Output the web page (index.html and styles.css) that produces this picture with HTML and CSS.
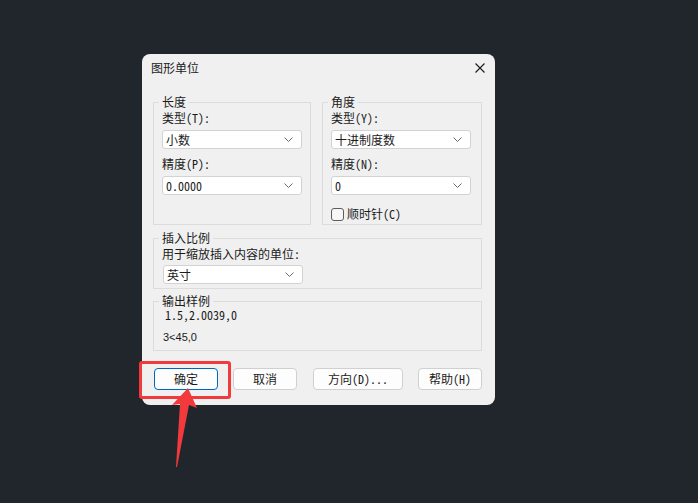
FILE: index.html
```html
<!DOCTYPE html>
<html lang="zh-CN">
<head>
<meta charset="utf-8">
<title>图形单位</title>
<link rel="stylesheet" href="styles.css">
</head>
<body>
<div class="stage">
  <div class="dialog">
    <div class="titlebar">
      <span class="title">图形单位</span>
      <svg class="close" width="10" height="10" viewBox="0 0 10 10"><path d="M0.5 0.5 L9.5 9.5 M9.5 0.5 L0.5 9.5" stroke="#1a1a1a" stroke-width="1.1" fill="none"/></svg>
    </div>
    <div class="content">
      <div class="row">
        <fieldset class="group g-len">
          <legend>长度</legend>
          <div class="label">类型(T):</div>
          <div class="select"><span>小数</span><svg class="chev" width="9" height="5" viewBox="0 0 9 5"><path d="M0.5 0.5 L4.5 4.5 L8.5 0.5" stroke="#6a6a6a" fill="none"/></svg></div>
          <div class="label gap">精度(P):</div>
          <div class="select"><span>0.0000</span><svg class="chev" width="9" height="5" viewBox="0 0 9 5"><path d="M0.5 0.5 L4.5 4.5 L8.5 0.5" stroke="#6a6a6a" fill="none"/></svg></div>
        </fieldset>
        <fieldset class="group g-ang">
          <legend>角度</legend>
          <div class="label">类型(Y):</div>
          <div class="select"><span>十进制度数</span><svg class="chev" width="9" height="5" viewBox="0 0 9 5"><path d="M0.5 0.5 L4.5 4.5 L8.5 0.5" stroke="#6a6a6a" fill="none"/></svg></div>
          <div class="label gap">精度(N):</div>
          <div class="select"><span>0</span><svg class="chev" width="9" height="5" viewBox="0 0 9 5"><path d="M0.5 0.5 L4.5 4.5 L8.5 0.5" stroke="#6a6a6a" fill="none"/></svg></div>
          <div class="check"><span class="box"></span><span>顺时针(C)</span></div>
        </fieldset>
      </div>
      <fieldset class="group g-ins">
        <legend>插入比例</legend>
        <div class="label">用于缩放插入内容的单位:</div>
        <div class="select s-ins"><span>英寸</span><svg class="chev" width="9" height="5" viewBox="0 0 9 5"><path d="M0.5 0.5 L4.5 4.5 L8.5 0.5" stroke="#6a6a6a" fill="none"/></svg></div>
      </fieldset>
      <fieldset class="group g-out">
        <legend>输出样例</legend>
        <div class="out1">1.5,2.0039,0</div>
        <div class="out2">3&lt;45,0</div>
      </fieldset>
      <div class="buttons">
        <div class="btn default">确定</div>
        <div class="btn">取消</div>
        <div class="btn wide">方向(D)...</div>
        <div class="btn">帮助(H)</div>
      </div>
    </div>
  </div>
  <div class="highlight"></div>
  <svg class="arrow" width="698" height="503" viewBox="0 0 698 503">
    <polygon points="188,388 197,408 189,405 177,467 176,467 180,404 172,405" fill="#f23a3c"/>
  </svg>
</div>
</body>
</html>
```

FILE: styles.css
```css
* { box-sizing: border-box; }
html, body { margin: 0; padding: 0; }
body {
  background: #21262d;
  font-family: "Noto Sans Mono CJK SC", "Noto Sans CJK SC", "Noto Sans", sans-serif;
  font-size: 12px;
  color: #1b1b1b;
  overflow: hidden;
}
.stage {
  position: relative;
  width: 698px;
  height: 503px;
  padding: 54px 0 0 142px;
}
.dialog {
  width: 353px;
  height: 351px;
  background: #f0f0f0;
  border-radius: 8px;
  display: flex;
  flex-direction: column;
}
.titlebar {
  height: 28px;
  display: flex;
  align-items: center;
  justify-content: space-between;
  padding: 0 10px 0 9px;
}
.title { font-family: "Noto Sans CJK SC", sans-serif; font-size: 12px; line-height: 16px; }
.close { display: block; }
.content {
  padding: 12px 13px 0 11px;
  display: flex;
  flex-direction: column;
}
.row { display: flex; gap: 11px; }
.group {
  margin: 0;
  border: 1px solid #dcdcdc;
  padding: 0 8px 0 8px;
  min-width: 0;
}
.group legend {
  padding: 0 3px;
  margin-left: -3px;
  line-height: 16px;
  font-family: "Noto Sans CJK SC", sans-serif;
}
.g-len { width: 158px; padding-bottom: 4px; }
.g-ang { width: 160px; padding-bottom: 2px; }
.label { line-height: 16px; height: 16px; white-space: nowrap; }
.label.gap { margin-top: 7px; }
.select {
  margin-top: 4px;
  width: 140px;
  height: 19px;
  background: #fff;
  border: 1px solid #d3d3d3;
  border-radius: 3px;
  display: flex;
  align-items: center;
  justify-content: space-between;
  padding: 0 8px 0 3px;
  line-height: 16px;
}
.chev { display: block; }
.check {
  margin-top: 11px;
  display: flex;
  align-items: center;
  gap: 3px;
  line-height: 16px;
}
.box {
  width: 13px;
  height: 13px;
  border: 1px solid #5c5c5c;
  border-radius: 3px;
  background: #f7f7f7;
}
.g-ins { margin-top: 5px; padding-bottom: 4px; }
.s-ins { margin-top: 3px; margin-left: 1px; }
.g-out { margin-top: 6px; padding-bottom: 7px; }
.g-out legend { line-height: 12px; }
.out1 { margin-top: 2px; line-height: 12px; padding-left: 3px; }
.out2 {
  margin-top: 10px;
  line-height: 12px;
  padding-left: 1px;
  font-family: "Liberation Sans", sans-serif;
  font-size: 11px;
}
.buttons {
  margin-top: 17px;
  margin-left: 1px;
  display: flex;
  gap: 15px;
}
.btn {
  width: 64px;
  height: 22px;
  border: 1px solid #d0d0d0;
  border-radius: 4px;
  background: #fdfdfd;
  display: flex;
  align-items: center;
  justify-content: center;
  line-height: 16px;
}
.btn.wide { width: 90px; margin-left: 1px; }
.btn.default { border-color: #0067c0; }
.highlight {
  position: absolute;
  left: 139px;
  top: 361px;
  width: 92px;
  height: 38px;
  border: 3px solid #f23a3c;
  border-radius: 3px;
}
.arrow {
  position: absolute;
  left: 0;
  top: 0;
  pointer-events: none;
}
```
